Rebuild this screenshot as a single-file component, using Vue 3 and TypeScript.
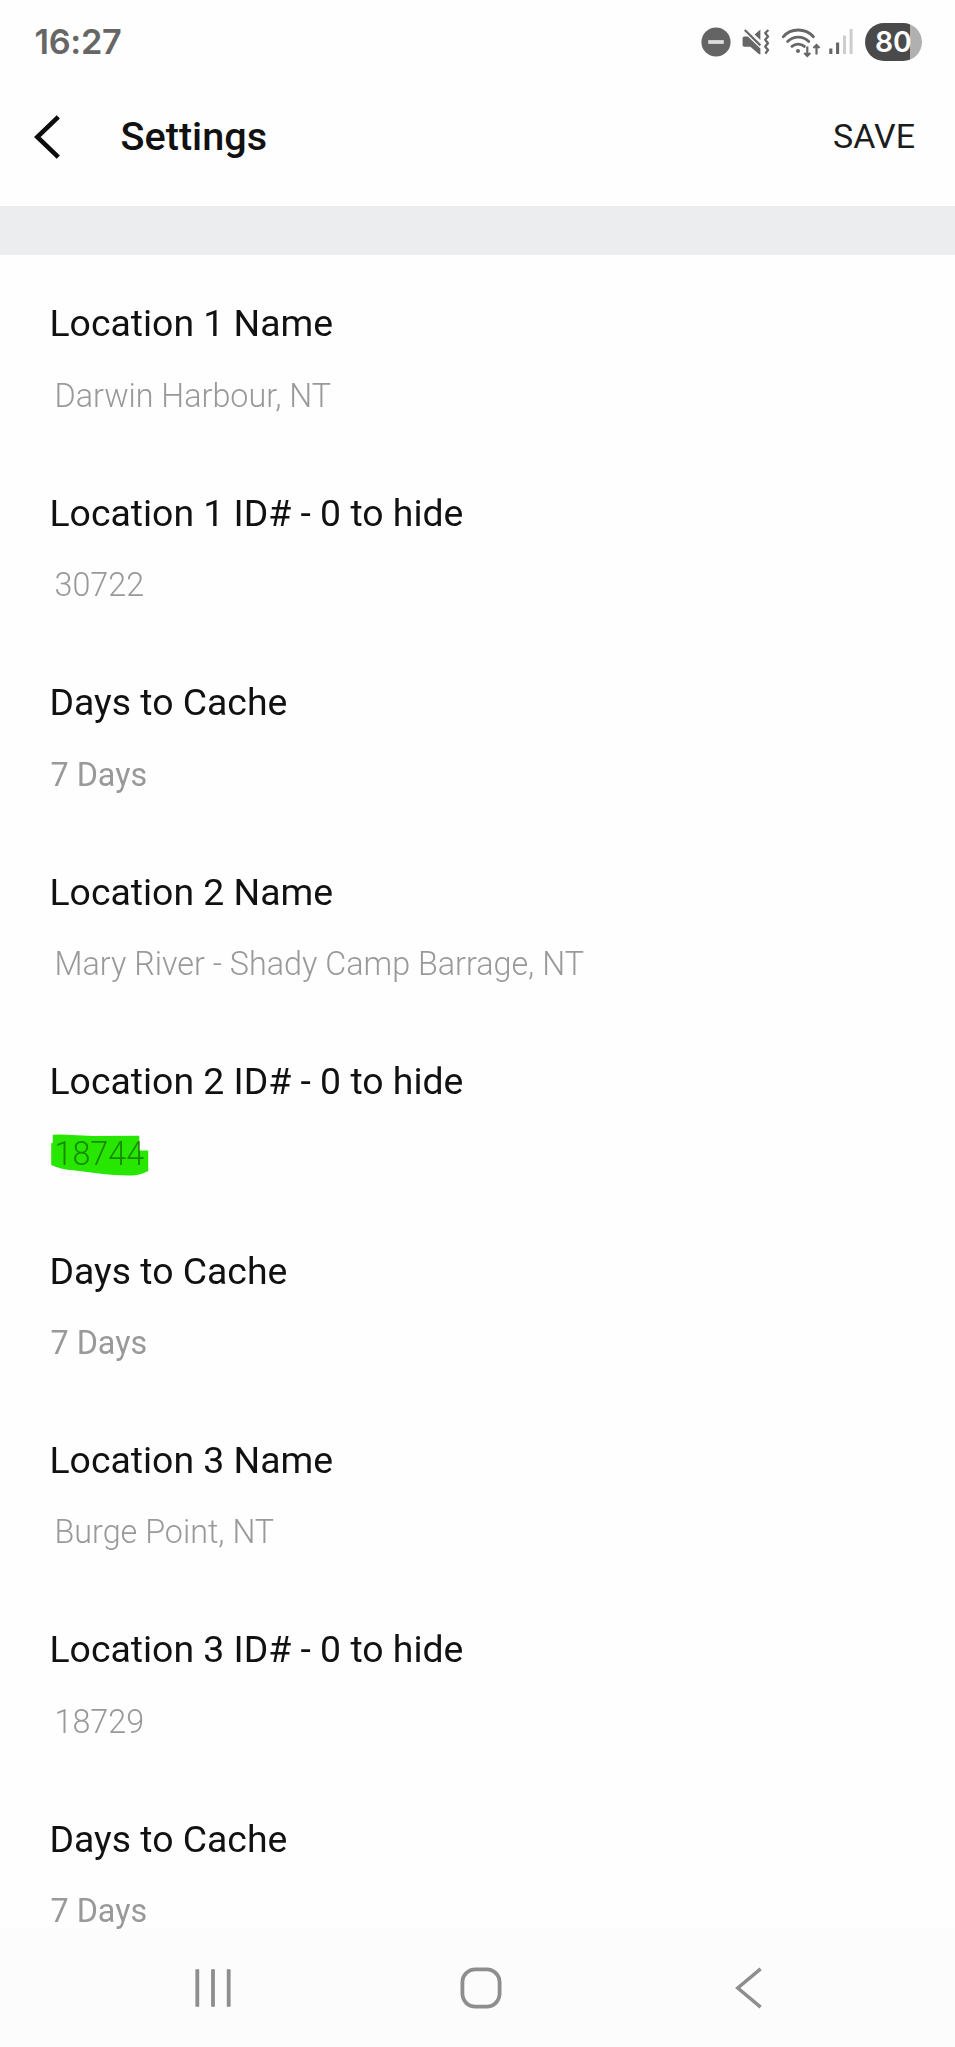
<script setup lang="ts">
interface Setting {
  label: string
  value: string
  kind: 'text' | 'select'
  marked?: boolean
}

const settings: Setting[] = [
  { label: 'Location 1 Name', value: 'Darwin Harbour, NT', kind: 'text' },
  { label: 'Location 1 ID# - 0 to hide', value: '30722', kind: 'text' },
  { label: 'Days to Cache', value: '7 Days', kind: 'select' },
  { label: 'Location 2 Name', value: 'Mary River - Shady Camp Barrage, NT', kind: 'text' },
  { label: 'Location 2 ID# - 0 to hide', value: '18744', kind: 'text', marked: true },
  { label: 'Days to Cache', value: '7 Days', kind: 'select' },
  { label: 'Location 3 Name', value: 'Burge Point, NT', kind: 'text' },
  { label: 'Location 3 ID# - 0 to hide', value: '18729', kind: 'text' },
  { label: 'Days to Cache', value: '7 Days', kind: 'select' },
]
</script>

<template>
  <div class="screen">
    <div class="status-bar">
      <span class="clock">16:27</span>
      <div class="indicators">
        <svg class="dnd" viewBox="0 0 30 30">
          <circle cx="15" cy="15" r="14.6" fill="#646464" />
          <path d="M7.2 15h15.6" stroke="#dedede" stroke-width="3.8" />
        </svg>
        <svg class="mute" viewBox="0 0 28 28" fill="#666">
          <path d="M.6 9.6 2 8.6H5.8L18.4 20.6V26.4L16.8 26 8.4 18.8H2L.6 17.8Z" />
          <path d="M12.6 6.4 18.4 1.4V12Z" />
          <path d="M2.8 2 18.4 17.4" fill="none" stroke="#666" stroke-width="2.2" />
          <path
            d="M26.4 2 23.2 5 26 8.4 23.2 11.8 26 15.2 23.2 18.6 26 22 23.4 25.6"
            fill="none" stroke="#666" stroke-width="2.3" stroke-linejoin="round"
          />
        </svg>
        <svg class="wifi" viewBox="0 0 40 32" fill="none" stroke="#666">
          <g stroke-width="2.8" stroke-linecap="round">
            <path d="M2.2 9.8Q8 3 17.2 3t15.2 6.8" />
            <path d="M6.6 14.6Q11 10.2 17.2 10.2t10.6 4.4" />
            <path d="M11 19.4Q13.6 17.2 17.2 17.2t6.2 2.2" />
          </g>
          <circle cx="17" cy="24" r="2" fill="#666" stroke="none" />
          <path d="M26.3 19.4V29M23.3 26l3 3 3-3" stroke-width="2.2" />
          <path d="M35.5 27.4V18M32.5 21l3-3 3 3" stroke-width="2.2" />
        </svg>
        <svg class="signal" viewBox="0 0 24 28">
          <path d="M1.8 26v-5.5M8.6 26V14.4" stroke="#666" stroke-width="3.1" />
          <path d="M15.5 26V7.6M22.1 26V1" stroke="#cdcdcd" stroke-width="3" />
        </svg>
        <div class="battery"><span>80</span></div>
      </div>
    </div>

    <header class="app-bar">
      <svg class="back" viewBox="0 0 27 46">
        <path d="M24.3 2.8 3.3 23l21 20.2" fill="none" stroke="#0c0c0c" stroke-width="4.6" />
      </svg>
      <h1>Settings</h1>
      <button class="save" type="button">SAVE</button>
    </header>
    <div class="divider"></div>

    <main class="settings">
      <section v-for="(item, i) in settings" :key="i" class="setting">
        <div class="label">{{ item.label }}</div>
        <div class="value" :class="item.kind">
          {{ item.value }}
          <svg v-if="item.marked" class="marker" viewBox="0 0 98 42">
            <path
              d="M1.8.8 10 .5 42 1.9 88.3 1.7V16.5H97.2V37Q88 41.8 78 41.5 62 41.4 52 40L24 36.6Q8 35 .2 31V9.5L1.8 8.6Z"
              fill="#27e600"
            />
          </svg>
        </div>
      </section>
    </main>

    <nav class="nav-bar">
      <svg class="recents" viewBox="0 0 36 42">
        <path d="M2.3 2.2v37.6M18 2.2v37.6M33.7 2.2v37.6" stroke="#8e8e8e" stroke-width="3.8" />
      </svg>
      <svg class="home" viewBox="0 0 42 42">
        <rect x="2.4" y="2.4" width="37.2" height="37.2" rx="13" fill="none" stroke="#8e8e8e" stroke-width="3.8" />
      </svg>
      <svg class="nav-back" viewBox="0 0 28 42">
        <path d="M25.6 1.8 2.8 21l22.8 19.2" fill="none" stroke="#8e8e8e" stroke-width="3.5" />
      </svg>
    </nav>
  </div>
</template>

<style>
body {
  margin: 0;
  background: #fefefe;
}
</style>

<style scoped>
.screen {
  display: flex;
  flex-direction: column;
  width: 100%;
  height: 2047px;
  background: #fefefe;
  font-family: Roboto, "Liberation Sans", sans-serif;
}
svg {
  display: block;
  flex: none;
}
.status-bar {
  display: flex;
  flex: none;
  align-items: center;
  justify-content: space-between;
  box-sizing: border-box;
  height: 83px;
  padding: 0 33px 0 34.5px;
}
.clock {
  color: #666;
  font: 600 34.3px/40px Inter, Roboto, sans-serif;
  letter-spacing: -0.3px;
}
.indicators {
  display: flex;
  align-items: center;
}
.dnd {
  width: 30px;
  height: 30px;
  margin-right: 11px;
}
.mute {
  width: 28px;
  height: 28px;
  margin-right: 11px;
}
.wifi {
  width: 40px;
  height: 32px;
  margin: 2px 8px 0 0;
}
.signal {
  width: 24px;
  height: 28px;
  margin-right: 12px;
}
.battery {
  display: flex;
  align-items: center;
  box-sizing: border-box;
  width: 57px;
  height: 38px;
  padding-left: 10px;
  border-radius: 19px;
  background: linear-gradient(to right, #4a4a4a 45px, #b0b0b0 45px);
  color: #fefefe;
  font: 600 28.3px/38px Inter, Roboto, sans-serif;
}
.app-bar {
  display: flex;
  flex: none;
  align-items: center;
  box-sizing: border-box;
  height: 123px;
  padding: 0 40px 15px 34px;
  color: #111;
}
.back {
  width: 27px;
  height: 46px;
}
h1 {
  flex: 1;
  margin: 0 0 0 59.6px;
  font-size: 39.6px;
  font-weight: 500;
  line-height: 46px;
}
.save {
  margin-bottom: 2px;
  padding: 0;
  border: 0;
  background: none;
  color: #1c1c1c;
  font: 400 34px/44px Roboto, sans-serif;
}
.divider {
  flex: none;
  height: 49px;
  background: #ebedef;
}
/* Sits above the navigation bar so the last row keeps its descenders */
.settings {
  position: relative;
  z-index: 1;
  flex: 1;
  min-height: 0;
  padding: 46.4px 49.5px 0;
}
.setting {
  height: 189.45px;
}
.label {
  color: #111;
  font-size: 37.36px;
  line-height: 44px;
}
.value {
  position: relative;
  width: max-content;
  margin-top: 30.4px;
  font-size: 32.3px;
  line-height: 40px;
}
.value.text {
  margin-left: 5px;
  color: #999;
  font-weight: 320;
}
.value.select {
  margin-left: 1px;
  color: #999;
}
/* Pen stroke drawn over the value, letting the digits show through */
.marker {
  position: absolute;
  top: 0.1px;
  left: -3.5px;
  width: 98px;
  height: 42px;
  mix-blend-mode: multiply;
}
.nav-bar {
  display: flex;
  flex: none;
  align-items: center;
  justify-content: space-between;
  box-sizing: border-box;
  height: 119px;
  padding: 0 192px 0 195px;
  background: #fcfcfc;
}
.recents {
  width: 36px;
  height: 42px;
}
.home {
  width: 42px;
  height: 42px;
  margin-left: -4px;
}
.nav-back {
  width: 28px;
  height: 42px;
}
</style>
